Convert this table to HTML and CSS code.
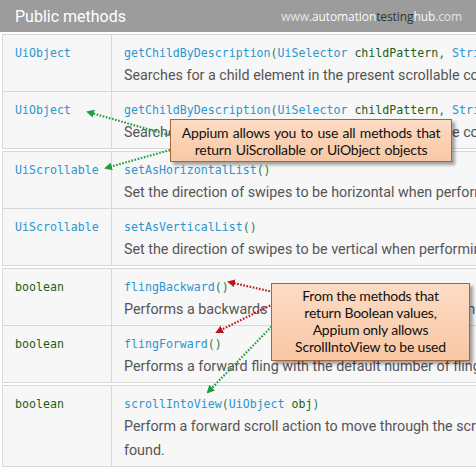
FILE: index.html
```
<!DOCTYPE html>
<html>
<head>
<meta charset="utf-8">
<link rel="stylesheet" href="styles.css">
</head>
<body>
<div class="page">
  <div class="header">
    <span class="title">Public methods</span>
    <span class="mark"><span class="w">www.</span><span class="a">automation</span><span class="t">testing</span><span class="a">hub</span><span class="w">.com</span></span>
  </div>

  <div class="block">
    <div class="row">
      <div class="type"><span class="cls">UiObject</span></div>
      <div class="main">
        <div class="code"><span class="fn">getChildByDescription</span><span class="par">(</span><span class="cls">UiSelector</span> <span class="arg">childPattern</span><span class="par">,</span> <span class="cls">String text)</span></div>
        <div class="desc">Searches for a child element in the present scrollable container.</div>
      </div>
    </div>
    <div class="row">
      <div class="type"><span class="cls">UiObject</span></div>
      <div class="main">
        <div class="code"><span class="fn">getChildByDescription</span><span class="par">(</span><span class="cls">UiSelector</span> <span class="arg">childPattern</span><span class="par">,</span> <span class="cls">String text)</span></div>
        <div class="desc">Searches for a child element in the present scrollable container.</div>
      </div>
    </div>
  </div>

  <div class="block">
    <div class="row">
      <div class="type"><span class="cls">UiScrollable</span></div>
      <div class="main">
        <div class="code"><span class="fn">setAsHorizontalList</span><span class="par">()</span></div>
        <div class="desc">Set the direction of swipes to be horizontal when performing scroll actions.</div>
      </div>
    </div>
    <div class="row">
      <div class="type"><span class="cls">UiScrollable</span></div>
      <div class="main">
        <div class="code"><span class="fn">setAsVerticalList</span><span class="par">()</span></div>
        <div class="desc">Set the direction of swipes to be vertical when performing scroll actions.</div>
      </div>
    </div>
  </div>

  <div class="block">
    <div class="row">
      <div class="type"><span class="bool">boolean</span></div>
      <div class="main">
        <div class="code"><span class="fn">flingBackward</span><span class="par">()</span></div>
        <div class="desc">Performs a backwards fling action with the default number of fling steps.</div>
      </div>
    </div>
    <div class="row">
      <div class="type"><span class="bool">boolean</span></div>
      <div class="main">
        <div class="code"><span class="fn">flingForward</span><span class="par">()</span></div>
        <div class="desc">Performs a forward fling with the default number of fling steps.</div>
      </div>
    </div>
  </div>

  <div class="block">
    <div class="row">
      <div class="type"><span class="bool">boolean</span></div>
      <div class="main">
        <div class="code"><span class="fn">scrollIntoView</span><span class="par">(</span><span class="cls">UiObject</span> <span class="arg">obj</span><span class="par">)</span></div>
        <div class="desc">Perform a forward scroll action to move through the scrollable layout element</div>
        <div class="desc">found.</div>
      </div>
    </div>
  </div>

  <svg class="arrows" width="476" height="470" viewBox="0 0 476 470">
    <defs>
      <marker id="hg" markerWidth="8" markerHeight="8" refX="6" refY="4" orient="auto" markerUnits="userSpaceOnUse">
        <path d="M0,0 L8,4 L0,8 Z" fill="#1e9e3e"/>
      </marker>
      <marker id="hr" markerWidth="8" markerHeight="8" refX="6" refY="4" orient="auto" markerUnits="userSpaceOnUse">
        <path d="M0,0 L8,4 L0,8 Z" fill="#c0141c"/>
      </marker>
    </defs>
    <line x1="172" y1="136" x2="88" y2="112" class="g" marker-end="url(#hg)"/>
    <line x1="170" y1="150" x2="106" y2="168" class="g" marker-end="url(#hg)"/>
    <line x1="273" y1="292" x2="229" y2="282" class="r" marker-end="url(#hr)"/>
    <line x1="273" y1="304" x2="217" y2="332" class="r" marker-end="url(#hr)"/>
    <line x1="276" y1="322" x2="208" y2="392" class="g" marker-end="url(#hg)"/>
  </svg>

  <div class="callout c1">Appium allows you to use all methods that<br>return UiScrollable or UiObject objects</div>
  <div class="callout c2">From the methods that<br>return Boolean values,<br>Appium only allows<br>ScrollIntoView to be used</div>
</div>
</body>
</html>
```
FILE: styles.css
```
html, body {
  margin: 0;
  padding: 0;
  background: #fff;
}
.page {
  position: relative;
  width: 476px;
  height: 470px;
  overflow: hidden;
  background: #fff;
}
.header {
  height: 32px;
  background: #9c9c9c;
  display: flex;
  align-items: center;
  justify-content: space-between;
  padding: 0 14px 0 15px;
  border-bottom: 2px solid #fff;
}
.title {
  font-family: Roboto, "Noto Sans", sans-serif;
  font-size: 16px;
  color: #fff;
}
.mark {
  font-family: "Open Sans", "Noto Sans", sans-serif;
  font-size: 12px;
  letter-spacing: -0.1px;
}
.mark .w { color: #e4e4e4; }
.mark .a { color: #fafafa; }
.mark .t { color: #333; }
.block {
  margin-left: 2px;
  border-top: 1px solid #d8d8d8;
  border-left: 1px solid #d8d8d8;
  background: #f7f7f7;
  margin-bottom: 2px;
}
.row {
  display: flex;
  border-bottom: 1px solid #d8d8d8;
}
.type {
  width: 96px;
  flex: none;
  padding: 8px 0 4px 12px;
  border-right: 1px solid #d8d8d8;
  font-family: "DejaVu Sans Mono", monospace;
  font-size: 11.6px;
  line-height: 20px;
}
.main {
  flex: 1;
  min-width: 0;
  padding: 8px 0 4px 12px;
  overflow: hidden;
}
.code {
  font-family: "DejaVu Sans Mono", monospace;
  font-size: 11.6px;
  line-height: 20px;
  white-space: nowrap;
}
.desc {
  font-family: Roboto, "Noto Sans", sans-serif;
  font-size: 14.3px;
  line-height: 24px;
  color: #555;
  white-space: nowrap;
}
.cls, .fn { color: #2b95cf; }
.par { color: #2e7d32; }
.arg { color: #1b5e20; }
.bool { color: #1b5e20; }
.arrows {
  position: absolute;
  left: 0;
  top: 0;
  pointer-events: none;
}
.arrows line {
  stroke-width: 2.2;
  stroke-dasharray: 1.6 1.6;
}
.arrows .g { stroke: #1e9e3e; }
.arrows .r { stroke: #c0141c; }
.callout {
  position: absolute;
  box-sizing: border-box;
  border: 1px solid #a8643c;
  background: linear-gradient(#fcdcc4, #f8c7a4);
  box-shadow: 3px 3px 3px rgba(0,0,0,0.35);
  font-family: Lato, "Open Sans", sans-serif;
  color: #111;
  text-align: center;
  white-space: nowrap;
  font-size: 14px;
  letter-spacing: -0.2px;
}
.c1 {
  left: 170px;
  top: 119px;
  width: 282px;
  height: 43px;
  line-height: 17px;
  padding-top: 4px;
  word-spacing: 1px;
}
.c2 {
  left: 271px;
  top: 283px;
  width: 199px;
  height: 78px;
  line-height: 17px;
  padding-top: 3px;
}
```
